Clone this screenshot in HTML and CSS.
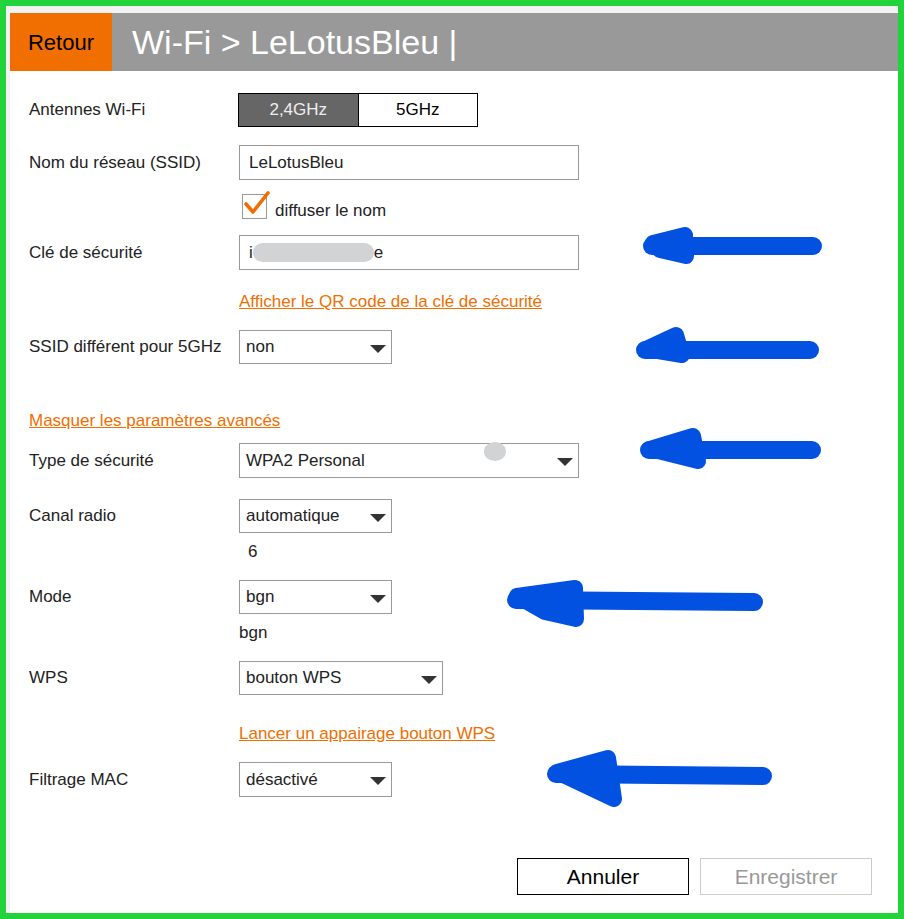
FILE: index.html
```html
<!DOCTYPE html>
<html lang="fr">
<head>
<meta charset="utf-8">
<title>Wi-Fi > LeLotusBleu</title>
<link rel="stylesheet" href="styles.css">
</head>
<body>
<div class="frame">
  <header class="topbar">
    <div class="back">Retour</div>
    <div class="title">Wi-Fi &gt; LeLotusBleu |</div>
  </header>
  <main class="form">
    <div class="row r-antenna">
      <div class="label">Antennes Wi-Fi</div>
      <div class="toggle">
        <span class="seg seg-on">2,4GHz</span>
        <span class="seg">5GHz</span>
      </div>
    </div>
    <div class="row r-ssid">
      <div class="label">Nom du réseau (SSID)</div>
      <div class="field w-340">LeLotusBleu</div>
    </div>
    <div class="row r-check">
      <div class="label"></div>
      <div class="checkline">
        <span class="checkbox">
          <svg class="tick" width="30" height="30" viewBox="0 0 30 30"><polyline points="4,14 11,22 26,3" fill="none" stroke="#f16e00" stroke-width="3.6" stroke-linecap="round" stroke-linejoin="round"/></svg>
        </span>
        <span class="checktext">diffuser le nom</span>
      </div>
    </div>
    <div class="row r-key">
      <div class="label">Clé de sécurité</div>
      <div class="field w-340">i<span class="blur"></span>e</div>
    </div>
    <div class="row r-qr">
      <div class="label"></div>
      <a class="link" href="#">Afficher le QR code de la clé de sécurité</a>
    </div>
    <div class="row r-diff">
      <div class="label">SSID différent pour 5GHz</div>
      <div class="select w-153"><span>non</span><i class="caret"></i></div>
    </div>
    <div class="row r-adv">
      <a class="link" href="#">Masquer les paramètres avancés</a>
    </div>
    <div class="row r-type">
      <div class="label">Type de sécurité</div>
      <div class="select w-340 has-dot"><span>WPA2 Personal</span><i class="caret"></i><b class="dot"></b></div>
    </div>
    <div class="row r-canal">
      <div class="label">Canal radio</div>
      <div class="select w-153"><span>automatique</span><i class="caret"></i></div>
    </div>
    <div class="row r-six">
      <div class="label"></div>
      <div class="value six">6</div>
    </div>
    <div class="row r-mode">
      <div class="label">Mode</div>
      <div class="select w-153"><span>bgn</span><i class="caret"></i></div>
    </div>
    <div class="row r-bgn">
      <div class="label"></div>
      <div class="value">bgn</div>
    </div>
    <div class="row r-wps">
      <div class="label">WPS</div>
      <div class="select w-204"><span>bouton WPS</span><i class="caret"></i></div>
    </div>
    <div class="row r-pair">
      <div class="label"></div>
      <a class="link" href="#">Lancer un appairage bouton WPS</a>
    </div>
    <div class="row r-mac">
      <div class="label">Filtrage MAC</div>
      <div class="select w-153"><span>désactivé</span><i class="caret"></i></div>
    </div>
    <div class="actions">
      <button class="btn btn-cancel" type="button">Annuler</button>
      <button class="btn btn-save" type="button">Enregistrer</button>
    </div>
  </main>
</div>
<svg class="arrows" width="904" height="919" viewBox="0 0 904 919">
  <g fill="#0251e0" stroke="#0251e0" stroke-linecap="round" stroke-linejoin="round">
    <line x1="652" y1="246" x2="813" y2="246" stroke-width="18"/>
    <polygon points="653,243 685,235 686,256 660,250" stroke-width="16"/>
    <line x1="645" y1="350" x2="810" y2="350" stroke-width="18"/>
    <polygon points="646,349 676,335 682,355" stroke-width="16"/>
    <line x1="649" y1="450" x2="812" y2="450" stroke-width="18"/>
    <polygon points="650,449 693,436 698,461" stroke-width="16"/>
    <line x1="516" y1="600" x2="754" y2="602" stroke-width="18"/>
    <polygon points="517,596 575,588 576,619 545,612" stroke-width="16"/>
    <line x1="556" y1="774" x2="763" y2="776" stroke-width="18"/>
    <polygon points="557,772 608,758 614,799" stroke-width="16"/>
  </g>
</svg>
</body>
</html>
```

FILE: styles.css
```css
* { box-sizing: border-box; }
html, body { margin: 0; padding: 0; }
body {
  width: 904px;
  height: 919px;
  background: #22d33c;
  font-family: "Liberation Sans", Arial, sans-serif;
  color: #222;
  position: relative;
  overflow: hidden;
}
.frame {
  margin: 6px;
  width: 892px;
  height: 907px;
  background: #fff;
  border-top: 7px solid #f3f3f3;
  border-left: 4px solid #f5f0f8;
}
.topbar {
  display: flex;
  height: 58px;
  background: #999999;
}
.back {
  width: 102px;
  background: #f16e00;
  color: #000;
  font-size: 22px;
  display: flex;
  align-items: center;
  justify-content: center;
  padding-top: 1px;
}
.title {
  color: #fff;
  font-size: 34px;
  display: flex;
  align-items: center;
  padding-left: 20px;
}
.form {
  display: flex;
  flex-direction: column;
  padding-left: 19px;
}
.row {
  display: grid;
  grid-template-columns: 210px auto;
  align-items: center;
  font-size: 17px;
}
.label { font-size: 17px; color: #222; }
.r-antenna { margin-top: 22px; }
.r-ssid { margin-top: 18px; }
.r-check { margin-top: 13px; }
.r-key { margin-top: 16px; }
.r-qr { margin-top: 22px; }
.r-diff { margin-top: 19px; }
.r-adv { margin-top: 47px; grid-template-columns: auto; justify-items: start; }
.r-type { margin-top: 13px; }
.r-canal { margin-top: 21px; }
.r-six { margin-top: 9px; }
.r-mode { margin-top: 19px; }
.r-bgn { margin-top: 9px; }
.r-wps { margin-top: 19px; }
.r-pair { margin-top: 29px; }
.r-mac { margin-top: 19px; }

.toggle {
  display: flex;
  width: 240px;
  height: 34px;
  border: 1px solid #000;
  margin-left: -1px;
}
.seg {
  flex: 1;
  display: flex;
  align-items: center;
  justify-content: center;
  font-size: 17px;
  color: #000;
  background: #fff;
}
.seg-on {
  background: #666;
  color: #eee;
  border-right: 1px solid #000;
}
.field {
  height: 35px;
  border: 1px solid #999;
  display: flex;
  align-items: center;
  padding-left: 9px;
  font-size: 17px;
  color: #222;
  background: #fff;
}
.w-340 { width: 340px; }
.w-153 { width: 153px; }
.w-204 { width: 204px; }
.blur {
  display: inline-block;
  width: 121px;
  height: 19px;
  border-radius: 10px;
  background: #d1d3d4;
}
.checkline {
  display: flex;
  align-items: center;
  height: 26px;
}
.checkbox {
  position: relative;
  width: 25px;
  height: 25px;
  border: 1px solid #999;
  margin-left: 3px;
  background: #fff;
}
.tick {
  position: absolute;
  left: -1px;
  top: -5px;
}
.checktext {
  margin-left: 8px;
  margin-top: 9px;
  font-size: 17px;
  color: #222;
}
.link {
  color: #f16e00;
  text-decoration: underline;
  font-size: 17px;
  line-height: 19px;
  justify-self: start;
}
.select {
  position: relative;
  height: 34px;
  border: 1px solid #999;
  display: flex;
  align-items: center;
  justify-content: space-between;
  padding-left: 6px;
  padding-right: 5px;
  font-size: 17px;
  color: #222;
  background: #fff;
}
.r-type .select, .r-mac .select { height: 35px; }
.caret {
  width: 0;
  height: 0;
  border-left: 8px solid transparent;
  border-right: 8px solid transparent;
  border-top: 8px solid #333;
  margin-top: 3px;
}
.dot {
  position: absolute;
  left: 244px;
  top: -2px;
  width: 22px;
  height: 19px;
  border-radius: 50%;
  background: #d1d3d4;
}
.value {
  font-size: 17px;
  line-height: 19px;
  color: #222;
}
.six { padding-left: 9px; }
.actions {
  display: flex;
  justify-content: flex-end;
  gap: 11px;
  margin-top: 61px;
  padding-right: 26px;
}
.btn {
  width: 172px;
  height: 37px;
  background: #fff;
  font-family: "Liberation Sans", Arial, sans-serif;
  font-size: 21px;
  padding: 0;
}
.btn-cancel { border: 1px solid #000; color: #000; }
.btn-save { border: 1px solid #ccc; color: #999; }
.arrows {
  position: absolute;
  left: 0;
  top: 0;
  pointer-events: none;
}
```
